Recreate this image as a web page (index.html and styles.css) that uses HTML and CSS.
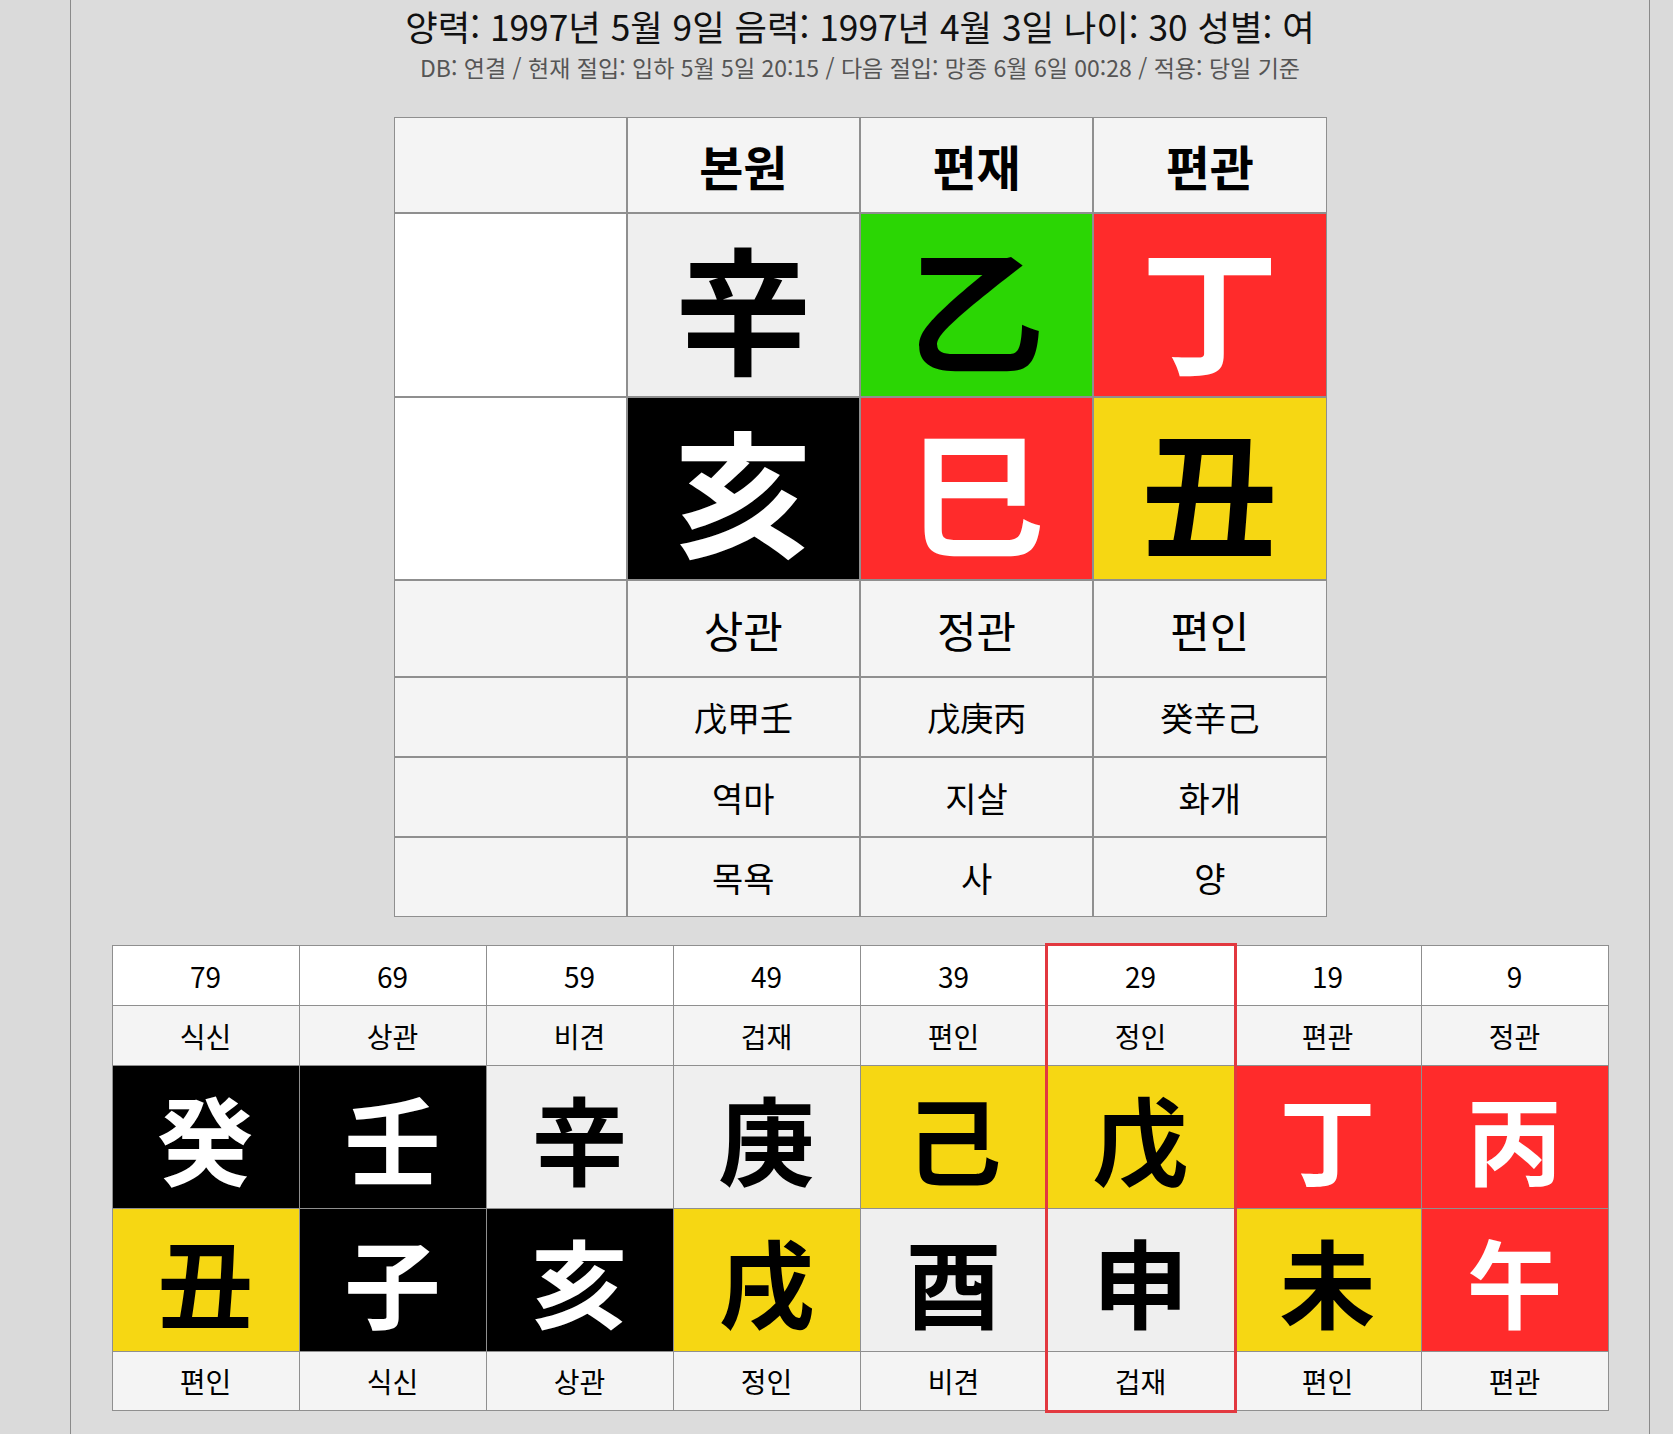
FILE: index.html
```html
<!DOCTYPE html>
<html lang="ko">
<head>
<meta charset="utf-8">
<title>사주</title>
<link rel="stylesheet" href="styles.css">
</head>
<body>
<div class="page">
  <header class="info">
    <h1 class="title">양력: 1997년 5월 9일 음력: 1997년 4월 3일 나이: 30 성별: 여</h1>
    <p class="sub">DB: 연결 / 현재 절입: 입하 5월 5일 20:15 / 다음 절입: 망종 6월 6일 00:28 / 적용: 당일 기준</p>
  </header>

  <section class="pillars">
    <div class="c head"></div>
    <div class="c head">본원</div>
    <div class="c head">편재</div>
    <div class="c head">편관</div>

    <div class="c big blank"></div>
    <div class="c big light">辛</div>
    <div class="c big green">乙</div>
    <div class="c big red">丁</div>

    <div class="c big blank"></div>
    <div class="c big black">亥</div>
    <div class="c big red">巳</div>
    <div class="c big yellow">丑</div>

    <div class="c god"></div>
    <div class="c god">상관</div>
    <div class="c god">정관</div>
    <div class="c god">편인</div>

    <div class="c hanja"></div>
    <div class="c hanja">戊甲壬</div>
    <div class="c hanja">戊庚丙</div>
    <div class="c hanja">癸辛己</div>

    <div class="c small"></div>
    <div class="c small">역마</div>
    <div class="c small">지살</div>
    <div class="c small">화개</div>

    <div class="c small"></div>
    <div class="c small">목욕</div>
    <div class="c small">사</div>
    <div class="c small">양</div>
  </section>

  <section class="luck">
    <div class="col">
      <div class="l age">79</div><div class="l god">식신</div>
      <div class="l ch black">癸</div><div class="l ch yellow">丑</div>
      <div class="l god end">편인</div>
    </div>
    <div class="col">
      <div class="l age">69</div><div class="l god">상관</div>
      <div class="l ch black">壬</div><div class="l ch black">子</div>
      <div class="l god end">식신</div>
    </div>
    <div class="col">
      <div class="l age">59</div><div class="l god">비견</div>
      <div class="l ch light">辛</div><div class="l ch black">亥</div>
      <div class="l god end">상관</div>
    </div>
    <div class="col">
      <div class="l age">49</div><div class="l god">겁재</div>
      <div class="l ch light">庚</div><div class="l ch yellow">戌</div>
      <div class="l god end">정인</div>
    </div>
    <div class="col">
      <div class="l age">39</div><div class="l god">편인</div>
      <div class="l ch yellow">己</div><div class="l ch light">酉</div>
      <div class="l god end">비견</div>
    </div>
    <div class="col current">
      <div class="l age">29</div><div class="l god">정인</div>
      <div class="l ch yellow">戊</div><div class="l ch light">申</div>
      <div class="l god end">겁재</div>
    </div>
    <div class="col">
      <div class="l age">19</div><div class="l god">편관</div>
      <div class="l ch red">丁</div><div class="l ch yellow">未</div>
      <div class="l god end">편인</div>
    </div>
    <div class="col">
      <div class="l age">9</div><div class="l god">정관</div>
      <div class="l ch red">丙</div><div class="l ch red">午</div>
      <div class="l god end">편관</div>
    </div>
  </section>
</div>
</body>
</html>
```

FILE: styles.css
```css
html, body {
  margin: 0;
  padding: 0;
  background: #dadada;
}

body {
  font-family: "Noto Sans CJK KR", "Noto Sans", sans-serif;
  color: #000;
}

.page {
  margin-left: 70px;
  width: 1580px;
  min-height: 1434px;
  box-sizing: border-box;
  border-left: 1px solid #8a8a8a;
  border-right: 1px solid #8a8a8a;
  background: #dcdcdc;
  display: flex;
  flex-direction: column;
  align-items: center;
  padding-top: 5px;
}

.info {
  display: flex;
  flex-direction: column;
  align-items: center;
}

.title {
  margin: 0;
  font-size: 35.3px;
  line-height: 42px;
  font-weight: 400;
  color: #111;
}

.sub {
  margin: 5px 0 0;
  font-size: 23px;
  line-height: 30px;
  color: #555;
}

/* ---------- main pillars ---------- */
.pillars {
  margin-top: 35px;
  display: grid;
  grid-template-columns: repeat(4, 231.25px);
  grid-template-rows: 94px 182px 181px 95px 78px 78px 78px;
  gap: 2px;
  padding: 1px;
  background: #8f8f8f;
}

.c {
  display: flex;
  align-items: center;
  justify-content: center;
  background: #f4f4f4;
  color: #000;
}

.head {
  font-size: 48px;
  font-weight: 700;
}

.big {
  font-size: 137px;
  font-weight: 700;
  line-height: 1;
}

.god {
  font-size: 43px;
}

.hanja {
  font-size: 33px;
}

.small {
  font-size: 34px;
}

.blank { background: #fff; }
.light { background: #efefef; color: #000; }
.green { background: #2bd604; color: #000; }
.red { background: #ff2b2b; color: #fff; }
.yellow { background: #f6d713; color: #000; }
.black { background: #000; color: #fff; }

/* ---------- luck cycles ---------- */
.luck {
  margin-top: 28px;
  display: flex;
  gap: 1px;
  padding: 1px;
  background: #8f8f8f;
}

.col {
  display: flex;
  flex-direction: column;
  gap: 1px;
  width: 186px;
}

.col.current {
  position: relative;
  z-index: 1;
  outline: 3px solid #e2383f;
}

.l {
  display: flex;
  align-items: center;
  justify-content: center;
  background: #f4f4f4;
  color: #000;
  font-size: 28px;
}

.l.age {
  height: 59px;
  background: #fff;
}

.l.god {
  height: 59px;
}

.l.god.end {
  height: 58px;
}

.l.ch {
  height: 142px;
  font-size: 96px;
  font-weight: 700;
  line-height: 1;
}

.l.ch.light { background: #efefef; color: #000; }
.l.ch.black { background: #000; color: #fff; }
.l.ch.yellow { background: #f6d713; color: #000; }
.l.ch.red { background: #ff2b2b; color: #fff; }
```
